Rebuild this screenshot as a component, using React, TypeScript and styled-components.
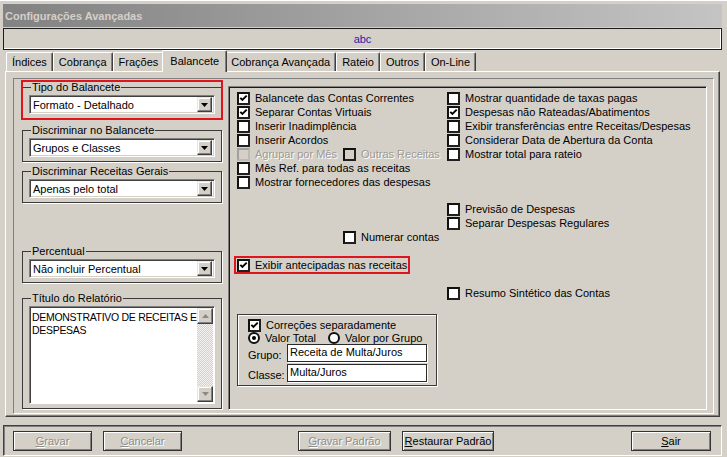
import React from 'react';
import styled, { createGlobalStyle } from 'styled-components';

const GlobalStyle = createGlobalStyle`
  html, body { margin: 0; padding: 0; background: #d4d0c8; }
  body {
    font-family: 'Liberation Sans', Arial, sans-serif;
    font-size: 11px;
    color: #000;
  }
  * { box-sizing: border-box; }
`;

const Window = styled.div`
  width: 727px;
  height: 457px;
  background: #d4d0c8;
  padding: 4px 5px 0 3px;
  display: flex;
  flex-direction: column;
  overflow: hidden;
  box-shadow: inset 0 3px 0 -2px #fff;
`;

const TitleBar = styled.div`
  flex: none;
  height: 23px;
  padding-left: 2px;
  display: flex;
  align-items: center;
  background: linear-gradient(to right, #828282, #c4c4c4);
  color: #d4d0c8;
  font-weight: bold;
  font-size: 11px;
`;

const HeaderPanel = styled.div`
  flex: none;
  height: 22px;
  margin-top: 1px;
  border: 1px solid #1c1c1c;
  box-shadow: inset -1px -1px 0 #fff;
  display: flex;
  align-items: center;
  justify-content: center;
  color: #2323a8;
`;

const TabStrip = styled.div`
  flex: none;
  height: 21px;
  padding-left: 3px;
  display: flex;
  align-items: flex-end;
  position: relative;
  z-index: 1;
`;

const Tab = styled.div<{ $active?: boolean }>`
  height: ${p => (p.$active ? '22px' : '19px')};
  margin: ${p => (p.$active ? '0 -2px -1px' : '0')};
  padding: ${p => (p.$active ? '0 7px 1px' : '0 5px')};
  display: flex;
  align-items: center;
  background: #d4d0c8;
  border-top: 1px solid #fff;
  border-left: 1px solid #fff;
  border-right: 1px solid #404040;
  box-shadow: inset -1px 0 0 #808080;
  border-radius: 2px 2px 0 0;
  white-space: nowrap;
  position: relative;
  z-index: ${p => (p.$active ? 2 : 0)};
`;

const TabPage = styled.div`
  flex: none;
  height: 346px;
  margin: 0 2px;
  padding: 6px 5px 2px 7px;
  border-top: 1px solid #fff;
  border-left: 1px solid #fff;
  border-right: 1px solid #404040;
  border-bottom: 1px solid #404040;
  box-shadow: inset -1px -1px 0 #808080;
  display: flex;
`;

const InnerPanel = styled.div`
  flex: 1;
  display: flex;
  gap: 6px;
  padding: 2px 6px 3px 8px;
  border-top: 1px solid #808080;
  border-left: 1px solid #808080;
  border-right: 1px solid #fff;
  border-bottom: 1px solid #fff;
`;

const LeftCol = styled.div`
  flex: none;
  width: 200px;
  display: flex;
  flex-direction: column;
`;

const Group = styled.fieldset<{ $top?: number; $highlight?: boolean }>`
  margin: ${p => p.$top ?? 0}px 0 0;
  padding: 2px 6px 4px;
  min-width: 0;
  border: 1px solid #3a3a3a;
  box-shadow: 1px 1px 0 #fff;
  outline: ${p => (p.$highlight ? '2px solid #e0141c' : 'none')};
  outline-offset: -1px;
`;

const Legend = styled.legend`
  padding: 0 1px;
  margin-left: 2px;
  line-height: 12px;
  font-size: 11px;
`;

const SelectBox = styled.div`
  height: 19px;
  display: flex;
  align-items: center;
  background: #fff;
  border: 1px solid;
  border-color: #808080 #fff #fff #808080;
  box-shadow: inset 1px 1px 0 #404040, inset -1px -1px 0 #d4d0c8;
  padding: 2px 2px 2px 3px;
`;

const SelectText = styled.span`
  flex: 1;
  white-space: nowrap;
  overflow: hidden;
`;

const RaisedButton = styled.span<{ $w?: number; $h?: number }>`
  flex: none;
  width: ${p => p.$w ?? 15}px;
  height: ${p => p.$h ?? 15}px;
  display: flex;
  align-items: center;
  justify-content: center;
  background: #d4d0c8;
  border: 1px solid;
  border-color: #e8e6e1 #404040 #404040 #e8e6e1;
  box-shadow: inset -1px -1px 0 #808080, inset 1px 1px 0 #fff;
`;

const Arrow = ({ up, dim }: { up?: boolean; dim?: boolean }) => (
  <svg width="7" height="4" viewBox="0 0 7 4" style={{ transform: up ? 'rotate(180deg)' : undefined }}>
    <path d="M0 0h7L3.5 4z" fill={dim ? '#8c8a85' : '#000'} />
  </svg>
);

const Select = ({ value }: { value: string }) => (
  <SelectBox>
    <SelectText>{value}</SelectText>
    <RaisedButton>
      <Arrow />
    </RaisedButton>
  </SelectBox>
);

const Memo = styled.div`
  height: 98px;
  display: flex;
  background: #fff;
  border: 1px solid;
  border-color: #808080 #fff #fff #808080;
  box-shadow: inset 1px 1px 0 #404040;
  padding: 1px;
`;

const MemoText = styled.div`
  flex: 1;
  min-width: 0;
  padding: 3px 1px;
  line-height: 13px;
  font-size: 10.5px;
  letter-spacing: -0.3px;
  white-space: nowrap;
`;

const ScrollBar = styled.div`
  flex: none;
  width: 16px;
  display: flex;
  flex-direction: column;
  justify-content: space-between;
  background: repeating-conic-gradient(#f4f3f1 0 25%, #d4d0c8 0 50%) 0 0 / 2px 2px;
`;

const RightPanel = styled.div`
  flex: 1;
  margin-top: 5px;
  padding: 4px 0 0 8px;
  border: 1px solid;
  border-color: #808080 #fff #fff #808080;
  box-shadow: inset 1px 1px 0 #1a1a1a, inset -1px -1px 0 #d4d0c8;
  display: flex;
  flex-direction: column;
  align-items: flex-start;
`;

const Columns = styled.div`
  display: flex;
`;

const List = styled.div<{ $w?: number }>`
  width: ${p => (p.$w ? `${p.$w}px` : 'auto')};
  display: flex;
  flex-direction: column;
`;

const Row = styled.div<{ $top?: number; $left?: number }>`
  display: flex;
  margin-top: ${p => p.$top ?? 0}px;
  margin-left: ${p => p.$left ?? 0}px;
`;

const CheckItem = styled.span<{ $w?: number; $h?: number }>`
  flex: none;
  width: ${p => (p.$w ? `${p.$w}px` : 'auto')};
  height: ${p => p.$h ?? 14}px;
  display: flex;
  align-items: center;
  gap: 5px;
  white-space: nowrap;
`;

const Box = styled.span<{ $fill?: boolean; $dim?: boolean }>`
  flex: none;
  width: 13px;
  height: 13px;
  display: flex;
  align-items: center;
  justify-content: center;
  border: 2px solid ${p => (p.$dim ? '#a19f99' : '#111')};
  border-right-color: ${p => (p.$dim ? '#bdbab3' : '#202020')};
  border-bottom-color: ${p => (p.$dim ? '#bdbab3' : '#202020')};
  background: ${p => (p.$fill ? '#d4d0c8' : '#fff')};
`;

const Label = styled.span<{ $disabled?: boolean }>`
  color: ${p => (p.$disabled ? '#9c9a94' : '#000')};
  text-shadow: ${p => (p.$disabled ? '1px 1px 0 #fff' : 'none')};
`;

const CheckMark = () => (
  <svg width="9" height="9" viewBox="0 0 9 9">
    <polyline points="1.3,3.8 3.4,6 7.7,1.6" fill="none" stroke="#000" strokeWidth="1.9" />
  </svg>
);

type CheckProps = { label: string; checked?: boolean; disabled?: boolean; dim?: boolean; w?: number };

const Check = ({ label, checked, disabled, dim, w }: CheckProps) => (
  <CheckItem $w={w}>
    <Box $fill={disabled} $dim={dim}>{checked && <CheckMark />}</Box>
    <Label $disabled={disabled}>{label}</Label>
  </CheckItem>
);

const Highlight = styled.div`
  display: flex;
  margin: 12px 0 0 -3px;
  padding: 0 1px 0 1px;
  border: 2px solid #e0141c;
`;

const Radio = styled.span<{ $on?: boolean }>`
  flex: none;
  width: 12px;
  height: 12px;
  border-radius: 50%;
  border: 2px solid #111;
  background: #fff;
  display: flex;
  align-items: center;
  justify-content: center;
  &::after {
    content: '';
    display: ${p => (p.$on ? 'block' : 'none')};
    width: 4px;
    height: 4px;
    border-radius: 50%;
    background: #000;
  }
`;

const CorrBox = styled.div`
  margin-top: 14px;
  width: 200px;
  height: 72px;
  padding: 3px 0 0 10px;
  border: 1px solid #3a3a3a;
  box-shadow: 1px 1px 0 #fff, inset 1px 1px 0 #fff;
  display: flex;
  flex-direction: column;
`;

const FieldRow = styled.div<{ $top?: number }>`
  display: flex;
  align-items: center;
  height: 18px;
  margin-top: ${p => p.$top ?? 0}px;
`;

const FieldLabel = styled.span`
  width: 39px;
  flex: none;
  padding-top: 3px;
`;

const Input = styled.div`
  width: 140px;
  height: 18px;
  padding: 1px 2px;
  background: #fff;
  border: 1px solid #2a2a2a;
  box-shadow: 1px 1px 0 #fff;
  white-space: nowrap;
`;

const ButtonBar = styled.div`
  flex: none;
  height: 31px;
  margin-top: 8px;
  padding: 5px 10px 0 9px;
  border: 1px solid;
  border-color: #404040 #fff #fff #404040;
  box-shadow: inset 1px 1px 0 #808080;
  display: flex;
  align-items: flex-start;
`;

const Button = styled.div<{ $w: number; $left?: number; $disabled?: boolean; $push?: boolean }>`
  width: ${p => p.$w}px;
  height: 20px;
  margin-left: ${p => (p.$push ? 'auto' : `${p.$left ?? 0}px`)};
  display: flex;
  align-items: center;
  justify-content: center;
  border: 1px solid #333;
  box-shadow: inset 1px 1px 0 #fff, inset -1px -1px 0 #808080;
  color: ${p => (p.$disabled ? '#8f8d87' : '#000')};
  text-shadow: ${p => (p.$disabled ? '1px 1px 0 #fff' : 'none')};
  white-space: nowrap;
`;

const tabs = ['Índices', 'Cobrança', 'Frações', 'Balancete', 'Cobrança Avançada', 'Rateio', 'Outros', 'On-Line'];

export default function App() {
  return (
    <>
      <GlobalStyle />
      <Window>
        <TitleBar>Configurações Avançadas</TitleBar>
        <HeaderPanel>abc</HeaderPanel>
        <TabStrip>
          {tabs.map(t => (
            <Tab key={t} $active={t === 'Balancete'}>{t}</Tab>
          ))}
        </TabStrip>
        <TabPage>
          <InnerPanel>
            <LeftCol>
              <Group $highlight>
                <Legend>Tipo do Balancete</Legend>
                <Select value="Formato - Detalhado" />
              </Group>
              <Group $top={5}>
                <Legend>Discriminar no Balancete</Legend>
                <Select value="Grupos e Classes" />
              </Group>
              <Group $top={3}>
                <Legend>Discriminar Receitas Gerais</Legend>
                <Select value="Apenas pelo total" />
              </Group>
              <Group $top={42}>
                <Legend>Percentual</Legend>
                <Select value="Não incluir Percentual" />
              </Group>
              <Group $top={9}>
                <Legend>Título do Relatório</Legend>
                <Memo>
                  <MemoText>
                    DEMONSTRATIVO DE RECEITAS E
                    <br />
                    DESPESAS
                  </MemoText>
                  <ScrollBar>
                    <RaisedButton $w={16} $h={16}><Arrow up dim /></RaisedButton>
                    <RaisedButton $w={16} $h={16}><Arrow dim /></RaisedButton>
                  </ScrollBar>
                </Memo>
              </Group>
            </LeftCol>

            <RightPanel>
              <Columns>
                <List $w={210}>
                  <Check label="Balancete das Contas Correntes" checked />
                  <Check label="Separar Contas Virtuais" checked />
                  <Check label="Inserir Inadimplência" />
                  <Check label="Inserir Acordos" />
                  <Row>
                    <Check label="Agrupar por Mês" disabled dim w={106} />
                    <Check label="Outras Receitas" disabled />
                  </Row>
                  <Check label="Mês Ref. para todas as receitas" />
                  <Check label="Mostrar fornecedores das despesas" />
                </List>
                <List>
                  <Check label="Mostrar quantidade de taxas pagas" />
                  <Check label="Despesas não Rateadas/Abatimentos" checked />
                  <Check label="Exibir transferências entre Receitas/Despesas" />
                  <Check label="Considerar Data de Abertura da Conta" />
                  <Check label="Mostrar total para rateio" />
                </List>
              </Columns>
              <List>
                <Row $top={13} $left={210}>
                  <List>
                    <Check label="Previsão de Despesas" />
                    <Check label="Separar Despesas Regulares" />
                  </List>
                </Row>
                <Row $left={106}>
                  <Check label="Numerar contas" />
                </Row>
              </List>
              <Highlight>
                <Check label="Exibir antecipadas nas receitas" checked />
              </Highlight>
              <Row $top={12} $left={210}>
                <Check label="Resumo Sintético das Contas" />
              </Row>
              <CorrBox>
                <Check label="Correções separadamente" checked />
                <Row>
                  <CheckItem $w={80} $h={12}>
                    <Radio $on />
                    <span>Valor Total</span>
                  </CheckItem>
                  <CheckItem $h={12}>
                    <Radio />
                    <span>Valor por Grupo</span>
                  </CheckItem>
                </Row>
                <FieldRow>
                  <FieldLabel>Grupo:</FieldLabel>
                  <Input>Receita de Multa/Juros</Input>
                </FieldRow>
                <FieldRow $top={2}>
                  <FieldLabel>Classe:</FieldLabel>
                  <Input>Multa/Juros</Input>
                </FieldRow>
              </CorrBox>
            </RightPanel>
          </InnerPanel>
        </TabPage>
        <ButtonBar>
          <Button $w={79} $disabled><u>G</u>ravar</Button>
          <Button $w={79} $left={11} $disabled><u>C</u>ancelar</Button>
          <Button $w={93} $left={116} $disabled><u>G</u>ravar Padrão</Button>
          <Button $w={92} $left={11}><u>R</u>estaurar Padrão</Button>
          <Button $w={80} $push><u>S</u>air</Button>
        </ButtonBar>
      </Window>
    </>
  );
}
